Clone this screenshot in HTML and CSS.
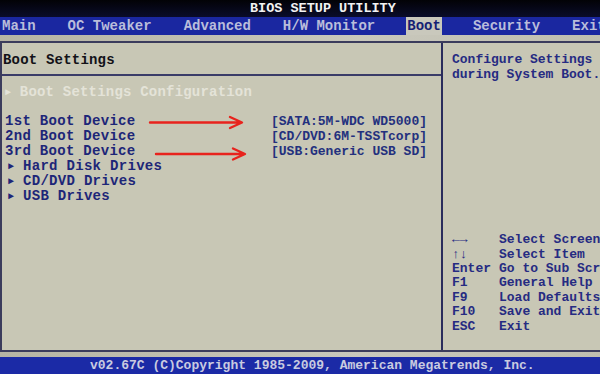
FILE: index.html
```html
<!DOCTYPE html>
<html lang="en">
<head>
    <meta charset="UTF-8">
    <meta name="viewport" content="width=device-width, initial-scale=1.0">
    <title>BIOS Setup Utility - Boot</title>
    <link rel="stylesheet" href="styles.css">
</head>
<body>
    <div class="screen">
        <header class="title">BIOS SETUP UTILITY</header>

        <nav class="menu">
            <span>Main</span>
            <span>OC Tweaker</span>
            <span>Advanced</span>
            <span>H/W Monitor</span>
            <span class="active">Boot</span>
            <span>Security</span>
            <span>Exit</span>
        </nav>

        <div class="band"></div>

        <main class="panel">
            <section class="left">
                <h1>Boot Settings</h1>
                <p class="disabled"><span class="tri">&#9658;</span> Boot Settings Configuration</p>

                <div class="devices">
                    <div class="row">
                        <span class="label">1st Boot Device</span>
                        <span class="arrow">
                            <svg width="121" height="15" viewBox="0 0 121 15">
                                <path d="M0 8.5 H91 M80 3 L92 8.5 L80 14" />
                            </svg>
                        </span>
                        <span class="value">[SATA:5M-WDC WD5000]</span>
                    </div>
                    <div class="row">
                        <span class="label">2nd Boot Device</span>
                        <span class="arrow"></span>
                        <span class="value">[CD/DVD:6M-TSSTcorp]</span>
                    </div>
                    <div class="row">
                        <span class="label">3rd Boot Device</span>
                        <span class="arrow">
                            <svg width="121" height="15" viewBox="0 0 121 15">
                                <path d="M6 10 H94 M83 4.5 L95 10 L83 15.5" />
                            </svg>
                        </span>
                        <span class="value">[USB:Generic USB SD]</span>
                    </div>
                </div>

                <ul class="submenus">
                    <li><span class="tri">&#9658;</span> Hard Disk Drives</li>
                    <li><span class="tri">&#9658;</span> CD/DVD Drives</li>
                    <li><span class="tri">&#9658;</span> USB Drives</li>
                </ul>
            </section>

            <aside class="right">
                <p class="help">Configure Settings<br>during System Boot.</p>

                <dl class="keys">
                    <dt>&#8592;&#8594;</dt><dd>Select Screen</dd>
                    <dt>&#8593;&#8595;</dt><dd>Select Item</dd>
                    <dt>Enter</dt><dd>Go to Sub Screen</dd>
                    <dt>F1</dt><dd>General Help</dd>
                    <dt>F9</dt><dd>Load Defaults</dd>
                    <dt>F10</dt><dd>Save and Exit</dd>
                    <dt>ESC</dt><dd>Exit</dd>
                </dl>
            </aside>
        </main>

        <div class="band band-bottom"></div>

        <footer class="footer">v02.67C (C)Copyright 1985-2009, American Megatrends, Inc.</footer>
    </div>
</body>
</html>
```

FILE: styles.css
```css
body {
    margin: 0;
    background-color: #c8c7b5;
    font-family: "Liberation Mono", "DejaVu Sans Mono", monospace;
}
.screen {
    width: 600px;
    height: 374px;
    overflow: hidden;
    display: flex;
    flex-direction: column;
}
.title {
    height: 17px;
    line-height: 18px;
    padding-left: 250px;
    background: linear-gradient(#020206, #0a0c2a);
    color: #f2f2f2;
    font-size: 13.5px;
    font-weight: bold;
    white-space: nowrap;
}
.menu {
    height: 18px;
    display: flex;
    gap: 32px;
    padding-left: 2px;
    background-color: #1a27a0;
    color: #b9bddb;
    font-size: 14px;
    font-weight: bold;
    line-height: 18px;
    white-space: nowrap;
    overflow: hidden;
}
.menu .active {
    background-color: #c9c8bc;
    color: #161f74;
    margin: 0 -1px;
    padding: 0 1px;
}
.band {
    height: 6px;
    background: linear-gradient(90deg, #b6b4a4, #c9c8bc 60%, #bfbeb0);
    flex-shrink: 0;
}
.band-bottom {
    height: 5px;
}
.panel {
    flex: 1;
    display: grid;
    grid-template-columns: 441px 1fr;
    border-top: 2px solid #3b3c5c;
    border-bottom: 2px solid #3b3c5c;
    border-left: 2px solid #3b3c5c;
    background-color: #c8c7b5;
    min-height: 0;
}
.left {
    border-right: 2px solid #2a2c5c;
    padding-top: 10px;
}
h1 {
    margin: 0;
    padding: 0 0 6px 1px;
    font-size: 14px;
    line-height: 15px;
    letter-spacing: 0.2px;
    color: #121218;
    border-bottom: 2px solid #3a3c68;
}
.disabled {
    margin: 9px 0 0 3px;
    font-size: 14px;
    line-height: 15px;
    font-weight: bold;
    letter-spacing: 0.2px;
    color: #e4e3d8;
    white-space: nowrap;
}
.tri {
    font-size: 10px;
    vertical-align: 1px;
}
.devices {
    margin-top: 14px;
}
.row {
    display: grid;
    grid-template-columns: 145px 121px auto;
    height: 15px;
    line-height: 15px;
    padding-left: 3px;
    white-space: nowrap;
}
.label {
    font-size: 14px;
    font-weight: bold;
    letter-spacing: 0.3px;
    color: #1d2678;
}
.arrow svg {
    display: block;
    overflow: visible;
}
.arrow path {
    fill: none;
    stroke: #e8231d;
    stroke-width: 2.4;
    stroke-linecap: round;
    stroke-linejoin: round;
}
.value {
    font-size: 13px;
    font-weight: bold;
    color: #23307e;
}
.submenus {
    list-style: none;
    margin: 0;
    padding-left: 6px;
}
.submenus li {
    font-size: 14px;
    font-weight: bold;
    line-height: 15px;
    letter-spacing: 0.3px;
    color: #1d2678;
    white-space: nowrap;
}
.right {
    display: flex;
    flex-direction: column;
    justify-content: space-between;
    padding: 9px 0 16px 9px;
    overflow: hidden;
    white-space: nowrap;
    color: #262b82;
    font-size: 13px;
    font-weight: bold;
}
.help {
    margin: 0;
    line-height: 15px;
}
.keys {
    display: grid;
    grid-template-columns: 47px 1fr;
    margin: 0;
    line-height: 14.4px;
}
.keys dd {
    margin: 0;
}
.footer {
    height: 17px;
    flex-shrink: 0;
    padding-left: 90px;
    background-color: #1b2aa6;
    color: #c9cbe0;
    font-size: 13px;
    font-weight: bold;
    line-height: 18px;
    white-space: nowrap;
}
```
